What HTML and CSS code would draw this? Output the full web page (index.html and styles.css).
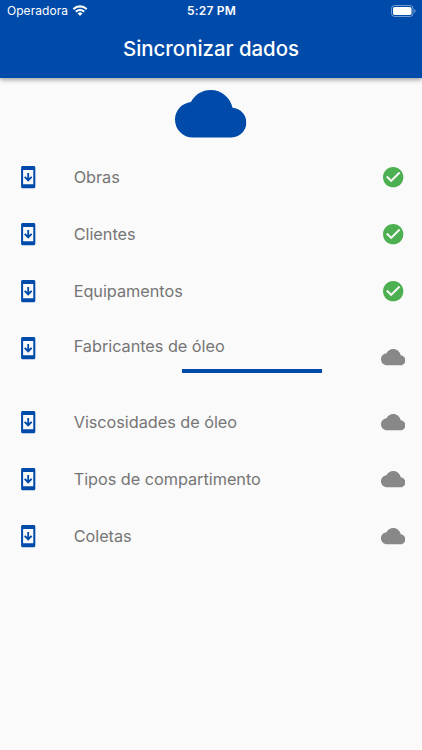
FILE: index.html
```html
<!DOCTYPE html>
<html lang="pt-BR">
<head>
<meta charset="utf-8">
<title>Sincronizar dados</title>
<link rel="stylesheet" href="styles.css">
</head>
<body>
<svg class="defs" width="0" height="0">
  <symbol id="phone" viewBox="0 0 24 24"><path fill-rule="evenodd" d="M6.500 1h11C18.400 1 19 1.600 19 2.500v19c0 .9-.6 1.500-1.500 1.500h-11C5.600 23 5 22.400 5 21.500v-19C5 1.600 5.600 1 6.500 1zM7 5v14h10V5z"/><path d="M11.100 7.800h1.800v5l1.900-1.700 1.300 1.300L12 16.400l-4.100-4 1.300-1.300 1.900 1.700z"/></symbol>
  <symbol id="cloud" viewBox="0 0 24 24"><path d="M19.350 10.040C18.670 6.590 15.640 4 12 4 9.110 4 6.600 5.640 5.350 8.040 2.340 8.360 0 10.910 0 14c0 3.310 2.690 6 6 6h13c2.760 0 5-2.240 5-5 0-2.640-2.050-4.780-4.650-4.960z"/></symbol>
  <symbol id="check" viewBox="0 0 24 24"><path d="M12 2C6.480 2 2 6.480 2 12s4.480 10 10 10 10-4.480 10-10S17.520 2 12 2zm-2 15l-5-5 1.410-1.410L10 14.170l7.590-7.590L19 8l-9 9z"/></symbol>
</svg>
<header class="appbar">
  <div class="status">
    <div class="carrier"><span>Operadora</span>
      <svg class="wifi" viewBox="0 0 16 12"><path d="M8 2.400c2.200 0 4.200.9 5.700 2.300.1.100.3.100.4 0l1.100-1.100c.1-.1.100-.3 0-.4A10.400 10.400 0 0 0 .8 3.200c-.1.100-.1.300 0 .4l1.100 1.100c.1.100.3.100.4 0A8.300 8.300 0 0 1 8 2.400zM8 6.100c1.200 0 2.300.4 3.200 1.200.1.100.3.100.4 0l1.100-1.100c.1-.1.100-.3 0-.4a6.900 6.900 0 0 0-9.400 0c-.1.100-.1.300 0 .4l1.100 1.100c.1.100.3.100.4 0 .9-.8 2-1.200 3.200-1.200zM10.200 8.700c.1-.1.100-.3 0-.4a3.400 3.400 0 0 0-4.400 0c-.1.100-.1.300 0 .4l2 2c.1.100.3.100.4 0z"/></svg>
    </div>
    <div class="time">5:27 PM</div>
    <svg class="battery" viewBox="0 0 25 12"><rect class="shell" x=".5" y=".5" width="21.500" height="11" rx="3.200"/><rect x="2" y="2" width="18.500" height="8" rx="1.800"/><path class="tip" d="M23.300 4.200c.9.300 1.300 1 1.300 1.800s-.4 1.500-1.300 1.800z"/></svg>
  </div>
  <h1>Sincronizar dados</h1>
</header>
<main>
  <svg class="hero"><use href="#cloud"/></svg>
  <ul class="list">
    <li><svg class="icon blue"><use href="#phone"/></svg><span class="label">Obras</span><svg class="icon green"><use href="#check"/></svg></li>
    <li><svg class="icon blue"><use href="#phone"/></svg><span class="label">Clientes</span><svg class="icon green"><use href="#check"/></svg></li>
    <li><svg class="icon blue"><use href="#phone"/></svg><span class="label">Equipamentos</span><svg class="icon green"><use href="#check"/></svg></li>
    <li class="active"><svg class="icon blue"><use href="#phone"/></svg><div class="body"><span class="label">Fabricantes de óleo</span><div class="track"><div class="bar"></div></div></div><svg class="icon gray"><use href="#cloud"/></svg></li>
    <li><svg class="icon blue"><use href="#phone"/></svg><span class="label">Viscosidades de óleo</span><svg class="icon gray"><use href="#cloud"/></svg></li>
    <li><svg class="icon blue"><use href="#phone"/></svg><span class="label">Tipos de compartimento</span><svg class="icon gray"><use href="#cloud"/></svg></li>
    <li><svg class="icon blue"><use href="#phone"/></svg><span class="label">Coletas</span><svg class="icon gray"><use href="#cloud"/></svg></li>
  </ul>
</main>
</body>
</html>
```
FILE: styles.css
```css
* { box-sizing: border-box; }
body { margin: 0; height: 750px; overflow: hidden; background: #fafafa; font-family: Inter, "Liberation Sans", sans-serif; }
.defs { display: block; }
.appbar { height: 77.500px; background: #004ba9; color: #fff; box-shadow: 0 2px 4px rgba(0,0,0,.25), 0 1px 6px rgba(0,0,0,.15); }
.status { display: grid; grid-template-columns: 1fr auto 1fr; align-items: center; height: 21px; padding: 0 6px 0 7px; font-size: 12px; line-height: 21px; }
.carrier { display: flex; align-items: center; gap: 4px; letter-spacing: .05px; }
.wifi { width: 16px; height: 12px; fill: #fff; }
.time { font-weight: 600; letter-spacing: .2px; }
.battery { width: 25px; height: 12px; justify-self: end; fill: #fff; }
.shell { fill: none; stroke: #fff; stroke-opacity: .45; }
.tip { fill-opacity: .5; }
h1 { margin: 0; height: 56.500px; line-height: 56px; text-align: center; font-size: 20.400px; font-weight: 500; letter-spacing: 0; }
.hero { display: block; width: 71.400px; height: 71.400px; margin: 0 auto; fill: #004ba9; }
.list { list-style: none; margin: 0; padding: 0; }
li { display: flex; align-items: center; height: 57px; padding: 0 16.600px 0 16.300px; }
.icon { width: 24.400px; height: 24.400px; flex: none; }
.blue { fill: #004ba9; margin-right: 33px; }
.green { fill: #4caf50; }
.gray { fill: #888; }
.label { flex: 1; font-size: 16.300px; line-height: 24px; color: #757575; letter-spacing: -.04px; }
.active { height: 73.600px; align-items: stretch; }
.active .icon { margin-top: 16.300px; }
.active .gray { margin-top: 25.200px; }
.body { flex: 1; padding-top: 14.500px; }
.body .label { display: block; }
.track { margin-top: 10.700px; height: 4px; }
.bar { width: 140px; height: 4px; margin-left: 108px; background: #004ba9; }
```
